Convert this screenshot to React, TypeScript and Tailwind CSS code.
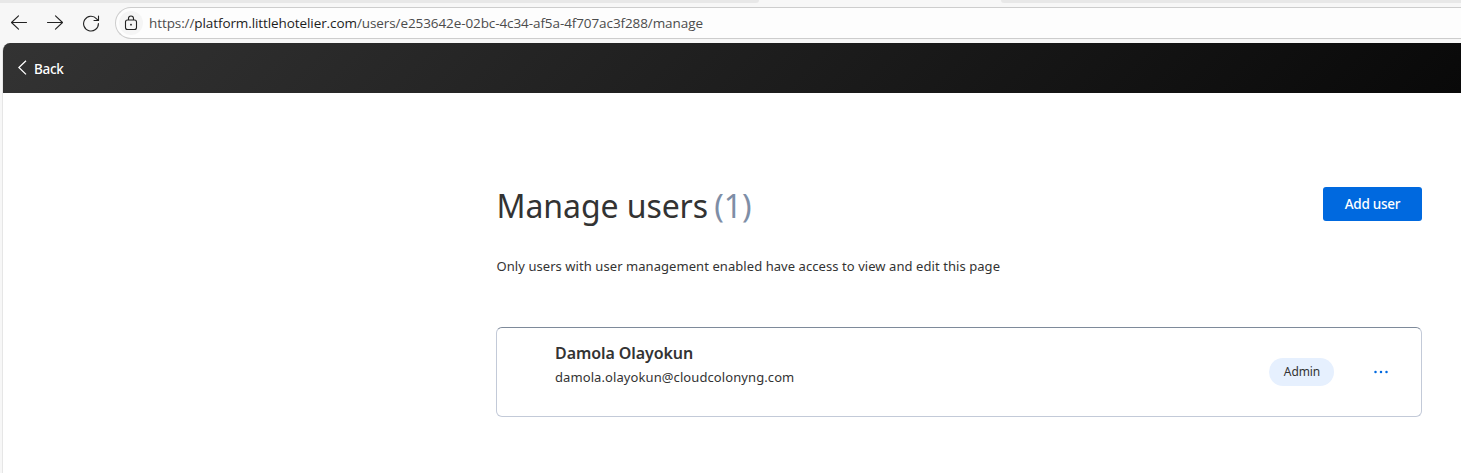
import React from "react";

function BrowserBar() {
  return (
    <div className="flex h-[43px] w-full flex-col overflow-hidden bg-[#f7f7f7]">
      <div className="flex h-[3px] shrink-0 justify-between">
        <div className="w-[759px] rounded-br-[6px] bg-[#e8e8e8]" />
        <div className="w-[460px] rounded-bl-[6px] bg-[#e8e8e8]" />
      </div>
      <div className="mt-1 flex h-8 shrink-0 items-center">
        <svg className="ml-[11px] shrink-0" width="16" height="16" viewBox="0 0 16 16" fill="none" stroke="#222" strokeWidth="1.1" strokeLinecap="round" strokeLinejoin="round">
          <path d="M15.5 7.5H.5M7.5.8.5 7.5l7 6.7" />
        </svg>
        <svg className="ml-5 shrink-0" width="16" height="16" viewBox="0 0 16 16" fill="none" stroke="#222" strokeWidth="1.1" strokeLinecap="round" strokeLinejoin="round">
          <path d="M.5 7.5h15M8.5.8l7 6.7-7 6.7" />
        </svg>
        <svg className="ml-5 shrink-0" width="17" height="17" viewBox="0 0 17 17" fill="none" stroke="#222" strokeWidth="1.1" strokeLinecap="round" strokeLinejoin="round">
          <path d="M15.4 8.6A7.4 7.4 0 1 1 13.6 3.8L15.3 5.5M15.5 1v4.5H11" />
        </svg>
        <div className="ml-[15px] flex h-8 flex-1 items-center rounded-l-full border border-r-0 border-[#cdcdcd] bg-[#fdfdfd]">
          <div className="ml-[3px] flex size-6 shrink-0 items-center justify-center rounded-full bg-[#f5f5f5]">
            <svg className="-mt-px" width="14" height="16" viewBox="0 0 14 16" fill="none" stroke="#222" strokeWidth="1.1">
              <rect x="1.5" y="5" width="11" height="9.5" rx="2" />
              <path d="M4.5 5V3.5a2.5 2.5 0 0 1 5 0V5" />
              <circle cx="7" cy="9.7" r=".9" fill="#222" stroke="none" />
            </svg>
          </div>
          <span className="ml-[6px] whitespace-nowrap font-['Open_Sans',sans-serif] text-[13.5px] leading-5 tracking-[-0.09px] text-[#4c4c4c]">
            https://<span className="text-[#1c1c1c]">platform.littlehotelier.com</span>/users/e253642e-02bc-4c34-af5a-4f707ac3f288/manage
          </span>
        </div>
      </div>
    </div>
  );
}

export default function App() {
  return (
    <div className="flex h-[473px] w-full flex-col overflow-hidden bg-[#f7f7f7] font-['Noto_Sans',sans-serif] text-[#333]">
      <BrowserBar />
      <div className="ml-[2px] flex flex-1 flex-col overflow-hidden rounded-tl-[8px] border-l border-[#e6e6e6] bg-white">
        <header className="flex h-[50px] shrink-0 items-center bg-[linear-gradient(135deg,#333333,#090909)] pl-[15px] text-white">
          <svg width="9" height="16" viewBox="0 0 9 16" fill="none" stroke="currentColor" strokeWidth="1.3">
            <path d="M8 .8.9 7.5 8 14.4" />
          </svg>
          <span className="ml-[7px] pt-px text-[13.5px] font-medium leading-5 tracking-[-0.3px]">Back</span>
        </header>
        <main className="ml-[493px] mt-[94px] flex w-[926px] flex-col">
          <div className="flex items-start justify-between">
            <h1 className="-mt-px h-[41px] pl-[0.5px] text-[32px] leading-10 tracking-[-0.08px]">
              Manage users <span className="-ml-[2px] text-[#7e8ea6]">(1)</span>
            </h1>
            <button className="h-[34px] w-[99px] rounded-[3px] bg-[#0069df] pt-px text-[13.5px] font-medium tracking-[-0.25px] text-white">Add user</button>
          </div>
          <p className="mt-[29px] pl-[0.5px] text-[13px] leading-5 tracking-[0.065px]">Only users with user management enabled have access to view and edit this page</p>
          <section className="mt-[51px] flex h-[90px] items-center rounded-[6px] border border-[#c3cad8] border-t-[#7e8a9a] pl-[58px] pr-[33px]">
            <div className="flex-1 self-start pt-[13px]">
              <h2 className="text-[16px] font-semibold leading-6 tracking-[-0.08px]">Damola Olayokun</h2>
              <p className="text-[13px] leading-6 tracking-[0.09px]">damola.olayokun@cloudcolonyng.com</p>
            </div>
            <span className="flex h-7 w-[65px] items-center justify-center rounded-full bg-[#e6f0fe] pl-px text-[12px] tracking-[-0.1px]">Admin</span>
            <button aria-label="User actions" className="ml-10">
              <svg width="14" height="4" viewBox="0 0 14 4" fill="#0069df">
                <circle cx="1.5" cy="2" r="1.25" />
                <circle cx="7" cy="2" r="1.25" />
                <circle cx="12.5" cy="2" r="1.25" />
              </svg>
            </button>
          </section>
        </main>
      </div>
    </div>
  );
}
